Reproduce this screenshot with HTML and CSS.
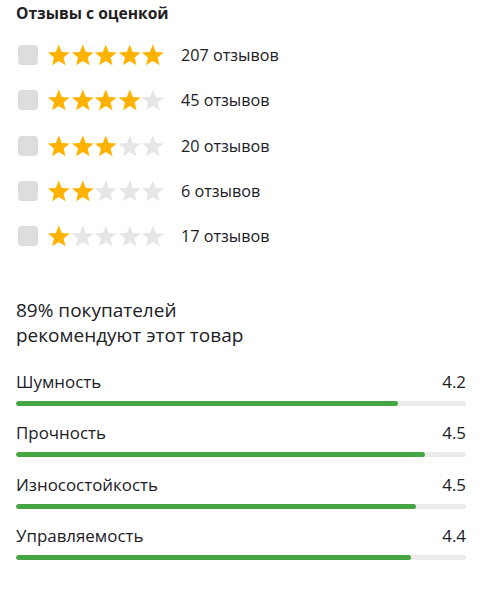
FILE: index.html
```html
<!DOCTYPE html>
<html lang="ru">
<head>
<meta charset="utf-8">
<title>Отзывы с оценкой</title>
<link rel="stylesheet" href="styles.css">
</head>
<body>
<svg class="defs" width="0" height="0" aria-hidden="true">
  <defs>
    <path id="star" d="M11.8 0.5 L14.8 7.9 L22.74 8.45 L16.6 13.6 L18.56 21.3 L11.8 17.1 L5.04 21.3 L7 13.6 L0.86 8.45 L8.8 7.9 Z"/>
  </defs>
</svg>
<div class="page">
  <h2 class="title">Отзывы с оценкой</h2>
  <ul class="filters">
    <li class="filter">
      <span class="check"></span>
      <span class="stars">
        <svg class="star on" viewBox="0 0 23.6 22"><use href="#star"/></svg><svg class="star on" viewBox="0 0 23.6 22"><use href="#star"/></svg><svg class="star on" viewBox="0 0 23.6 22"><use href="#star"/></svg><svg class="star on" viewBox="0 0 23.6 22"><use href="#star"/></svg><svg class="star on" viewBox="0 0 23.6 22"><use href="#star"/></svg>
      </span>
      <span class="count">207 отзывов</span>
    </li>
    <li class="filter">
      <span class="check"></span>
      <span class="stars">
        <svg class="star on" viewBox="0 0 23.6 22"><use href="#star"/></svg><svg class="star on" viewBox="0 0 23.6 22"><use href="#star"/></svg><svg class="star on" viewBox="0 0 23.6 22"><use href="#star"/></svg><svg class="star on" viewBox="0 0 23.6 22"><use href="#star"/></svg><svg class="star" viewBox="0 0 23.6 22"><use href="#star"/></svg>
      </span>
      <span class="count">45 отзывов</span>
    </li>
    <li class="filter">
      <span class="check"></span>
      <span class="stars">
        <svg class="star on" viewBox="0 0 23.6 22"><use href="#star"/></svg><svg class="star on" viewBox="0 0 23.6 22"><use href="#star"/></svg><svg class="star on" viewBox="0 0 23.6 22"><use href="#star"/></svg><svg class="star" viewBox="0 0 23.6 22"><use href="#star"/></svg><svg class="star" viewBox="0 0 23.6 22"><use href="#star"/></svg>
      </span>
      <span class="count">20 отзывов</span>
    </li>
    <li class="filter">
      <span class="check"></span>
      <span class="stars">
        <svg class="star on" viewBox="0 0 23.6 22"><use href="#star"/></svg><svg class="star on" viewBox="0 0 23.6 22"><use href="#star"/></svg><svg class="star" viewBox="0 0 23.6 22"><use href="#star"/></svg><svg class="star" viewBox="0 0 23.6 22"><use href="#star"/></svg><svg class="star" viewBox="0 0 23.6 22"><use href="#star"/></svg>
      </span>
      <span class="count">6 отзывов</span>
    </li>
    <li class="filter">
      <span class="check"></span>
      <span class="stars">
        <svg class="star on" viewBox="0 0 23.6 22"><use href="#star"/></svg><svg class="star" viewBox="0 0 23.6 22"><use href="#star"/></svg><svg class="star" viewBox="0 0 23.6 22"><use href="#star"/></svg><svg class="star" viewBox="0 0 23.6 22"><use href="#star"/></svg><svg class="star" viewBox="0 0 23.6 22"><use href="#star"/></svg>
      </span>
      <span class="count">17 отзывов</span>
    </li>
  </ul>

  <p class="recommend">89% покупателей<br>рекомендуют этот товар</p>

  <ul class="chars">
    <li class="char">
      <div class="char-head"><span class="char-name">Шумность</span><span class="char-value">4.2</span></div>
      <div class="bar"><div class="fill" style="width:84.9%"></div></div>
    </li>
    <li class="char">
      <div class="char-head"><span class="char-name">Прочность</span><span class="char-value">4.5</span></div>
      <div class="bar"><div class="fill" style="width:90.9%"></div></div>
    </li>
    <li class="char">
      <div class="char-head"><span class="char-name">Износостойкость</span><span class="char-value">4.5</span></div>
      <div class="bar"><div class="fill" style="width:88.9%"></div></div>
    </li>
    <li class="char">
      <div class="char-head"><span class="char-name">Управляемость</span><span class="char-value">4.4</span></div>
      <div class="bar"><div class="fill" style="width:87.8%"></div></div>
    </li>
  </ul>
</div>
</body>
</html>
```

FILE: styles.css
```css
* { box-sizing: border-box; }

html, body {
  margin: 0;
  padding: 0;
  background: #ffffff;
}

body {
  font-family: "Open Sans", "Noto Sans", Arial, sans-serif;
  color: #21201f;
}

.defs {
  position: absolute;
  width: 0;
  height: 0;
  overflow: hidden;
}

.page {
  padding: 3px 21px 40px 16px;
}

.title {
  margin: 0;
  font-size: 15.6px;
  line-height: 20px;
  font-weight: 700;
}

.filters {
  list-style: none;
  margin: 22px 0 0;
  padding: 0;
  display: flex;
  flex-direction: column;
  gap: 25.25px;
}

.filter {
  display: flex;
  align-items: center;
  height: 20px;
}

.check {
  width: 20px;
  height: 20px;
  margin-left: 2px;
  border-radius: 4px;
  background: #dddddd;
  flex: none;
}

.stars {
  display: flex;
  margin-left: 9px;
  flex: none;
}

.star {
  display: block;
  width: 23.6px;
  height: 22px;
  fill: #e6e6e6;
}

.star.on {
  fill: #ffb300;
}

.count {
  margin-left: 16px;
  font-size: 16.2px;
  line-height: 20px;
}

.recommend {
  margin: 52px 0 0;
  font-size: 19px;
  line-height: 25px;
}

.chars {
  list-style: none;
  margin: 22px 0 0;
  padding: 0;
  display: flex;
  flex-direction: column;
  gap: 15.3px;
}

.char-head {
  display: flex;
  justify-content: space-between;
  font-size: 16.9px;
  line-height: 24px;
}

.bar {
  margin-top: 7px;
  height: 5px;
  border-radius: 3px;
  background: #ebebeb;
  overflow: hidden;
}

.fill {
  height: 100%;
  border-radius: 3px;
  background: #44a744;
}
```
